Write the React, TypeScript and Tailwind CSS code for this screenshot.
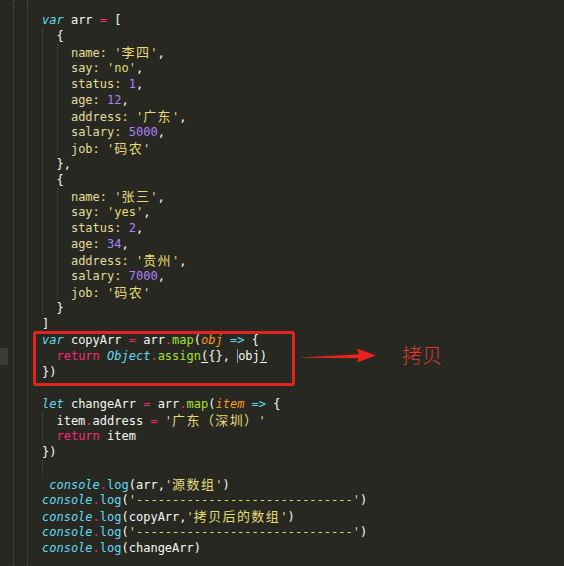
import type { ReactNode } from 'react'

const mono = "font-['DejaVu_Sans_Mono','Liberation_Mono',monospace]"

// split CJK runs out so they can take two columns like the editor does
function Txt({ s }: { s: string }) {
  const parts = s.split(/([\u3000-\u9fff\uff00-\uffef]+)/)
  return (
    <>
      {parts.map((p, i) =>
        /[\u3000-\u9fff\uff00-\uffef]/.test(p) ? (
          <span key={i} className="font-['Noto_Sans_CJK_SC',sans-serif] text-[13px] tracking-[1.4px]">
            {p}
          </span>
        ) : (
          <span key={i}>{p}</span>
        )
      )}
    </>
  )
}

const K = ({ c }: { c: string }) => <span className="italic text-[#66d9ef]">{c}</span>
const P = ({ c }: { c: string }) => <span className="text-[#f92672]">{c}</span>
const F = ({ c }: { c: string }) => <span className="text-[#a6e22e]">{c}</span>
const C = ({ c }: { c: string }) => <span className="text-[#66d9ef]">{c}</span>
const A = ({ c }: { c: string }) => <span className="italic text-[#fd971f]">{c}</span>
const N = ({ c }: { c: string }) => <span className="text-[#ae81ff]">{c}</span>
const S = ({ c }: { c: string }) => (
  <span className="text-[#e6db74]">
    <Txt s={c} />
  </span>
)
const Key = ({ c }: { c: string }) => <span className="text-[#e2dc9a]">{c}: </span>

const prop = (k: string, v: ReactNode, last = false) => (
  <>
    {'    '}
    <Key c={k} />
    {v}
    {last ? '' : ','}
  </>
)

const person = (name: string, say: string, status: string, age: string, addr: string, salary: string) => [
  <>{'  {'}</>,
  prop('name', <S c={`'${name}'`} />),
  prop('say', <S c={`'${say}'`} />),
  prop('status', <N c={status} />),
  prop('age', <N c={age} />),
  prop('address', <S c={`'${addr}'`} />),
  prop('salary', <N c={salary} />),
  prop('job', <S c="'码农'" />, true),
]

const log = (inner: ReactNode, lead = '') => (
  <>
    {lead}
    <K c="console" />
    <P c="." />
    <C c="log" />
    {'('}
    {inner}
    {')'}
  </>
)

const lines: ReactNode[] = [
  <>
    <K c="var" /> arr <P c="=" /> [
  </>,
  ...person('李四', 'no', '1', '12', '广东', '5000'),
  <>{'  },'}</>,
  ...person('张三', 'yes', '2', '34', '贵州', '7000'),
  <>{'  }'}</>,
  <>]</>,
  <>
    <K c="var" /> copyArr <P c="=" /> arr<P c="." />
    <F c="map" />(<A c="obj" /> <C c="=>" /> {'{'}
  </>,
  <>
    {'  '}
    <P c="return" /> <K c="Object" />
    <P c="." />
    <F c="assign" />
    <span className="underline decoration-[#f8f8f2] underline-offset-2">(</span>
    {'{}, '}
    <span className="border-l border-[#9a9a90]">obj</span>
    <span className="underline decoration-[#f8f8f2] underline-offset-2">)</span>
  </>,
  <>{'})'}</>,
  null,
  <>
    <K c="let" /> changeArr <P c="=" /> arr<P c="." />
    <F c="map" />(<A c="item" /> <C c="=>" /> {'{'}
  </>,
  <>
    {'  item'}
    <P c="." />
    {'address '}
    <P c="=" /> <S c="'广东（深圳）'" />
  </>,
  <>
    {'  '}
    <P c="return" /> item
  </>,
  <>{'})'}</>,
  null,
  log(
    <>
      arr,
      <S c="'源数组'" />
    </>,
    ' '
  ),
  log(<S c="'------------------------------'" />),
  log(
    <>
      copyArr,
      <S c="'拷贝后的数组'" />
    </>
  ),
  log(<S c="'------------------------------'" />),
  log(<>changeArr</>),
]

export default function App() {
  return (
    <div className={`relative w-[564px] h-[566px] overflow-hidden bg-[#272822] text-[#f8f8f2] ${mono} text-[12px]`}>
      {/* indent guides */}
      <div className="absolute left-[13px] top-0 h-full border-l border-dotted border-[#4d4d44]" />
      <div className="absolute left-[27px] top-0 h-full border-l border-dotted border-[#4d4d44]" />
      <div className="absolute left-[42px] top-[28px] h-[288px] border-l border-dotted border-[#4d4d44]" />
      <div className="absolute left-[42px] top-[412px] h-[32px] border-l border-dotted border-[#4d4d44]" />
      <div className="absolute left-[42px] top-[460px] h-[16px] border-l border-dotted border-[#4d4d44]" />
      <div className="absolute left-[57px] top-[44px] h-[112px] border-l border-dotted border-[#4d4d44]" />
      <div className="absolute left-[57px] top-[188px] h-[112px] border-l border-dotted border-[#4d4d44]" />
      {/* gutter current line marker */}
      <div className="absolute left-0 top-[348px] w-[8px] h-[17px] bg-[#3b3c35]" />

      <div className="pl-[42px] pt-3">
        {lines.map((l, i) => (
          <div key={i} className="h-4 leading-4 whitespace-pre">
            {l}
          </div>
        ))}
      </div>

      {/* annotation */}
      <div className="absolute left-[33px] top-[331px] w-[262px] h-[55px] border-[3px] border-[#e3231d] rounded-[3px]" />
      <svg className="absolute left-[300px] top-[345px]" width="78" height="20" viewBox="0 0 78 20">
        <path d="M1 12.4 L59 9.2 L57 3.5 L76 10.5 L57 17.5 L58.5 13.2 L1 12.8 Z" fill="#e8231d" />
      </svg>
      <div className="absolute left-[402px] top-[341px] text-[20px] leading-7 text-[#d93a2f] font-['Noto_Sans_CJK_SC',sans-serif] font-light">
        拷贝
      </div>
    </div>
  )
}
